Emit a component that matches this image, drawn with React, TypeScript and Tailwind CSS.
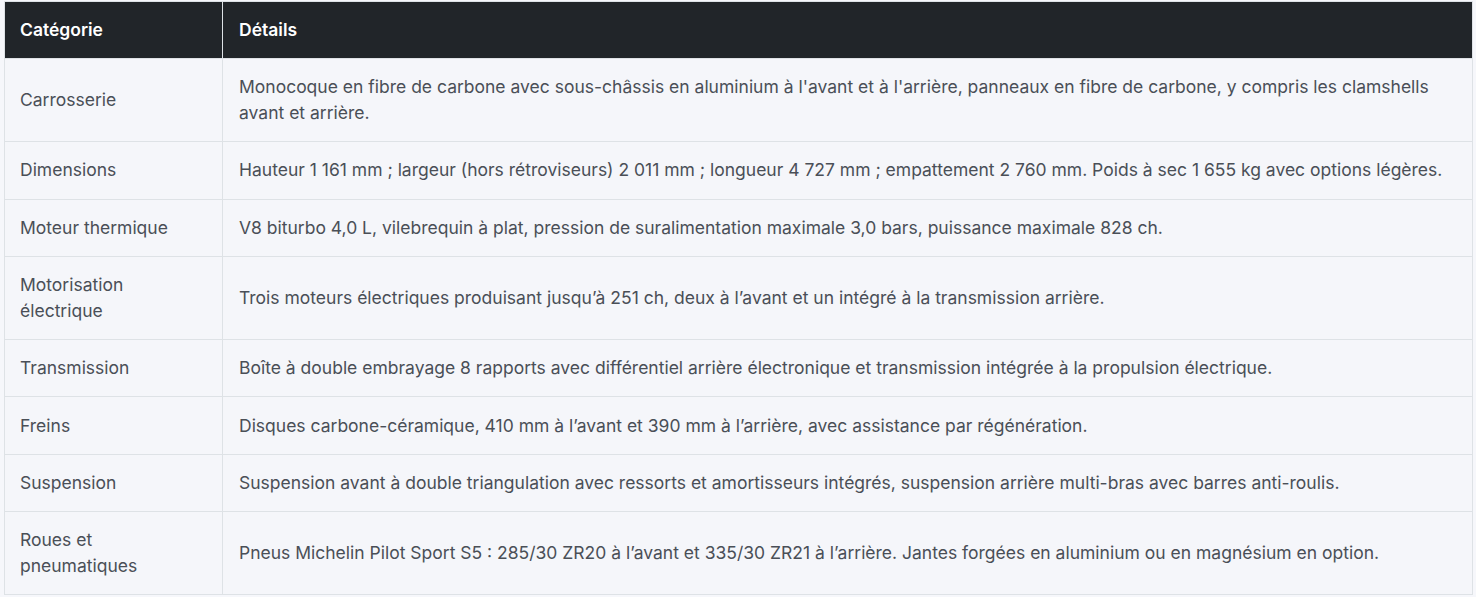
import React from "react";

const rows = [
  {
    category: "Carrosserie",
    details:
      "Monocoque en fibre de carbone avec sous-châssis en aluminium à l'avant et à l'arrière, panneaux en fibre de carbone, y compris les clamshells avant et arrière.",
  },
  {
    category: "Dimensions",
    details:
      "Hauteur 1 161 mm ; largeur (hors rétroviseurs) 2 011 mm ; longueur 4 727 mm ; empattement 2 760 mm. Poids à sec 1 655 kg avec options légères.",
  },
  {
    category: "Moteur thermique",
    details:
      "V8 biturbo 4,0 L, vilebrequin à plat, pression de suralimentation maximale 3,0 bars, puissance maximale 828 ch.",
  },
  {
    category: "Motorisation électrique",
    details:
      "Trois moteurs électriques produisant jusqu’à 251 ch, deux à l’avant et un intégré à la transmission arrière.",
  },
  {
    category: "Transmission",
    details:
      "Boîte à double embrayage 8 rapports avec différentiel arrière électronique et transmission intégrée à la propulsion électrique.",
  },
  {
    category: "Freins",
    details:
      "Disques carbone-céramique, 410 mm à l’avant et 390 mm à l’arrière, avec assistance par régénération.",
  },
  {
    category: "Suspension",
    details:
      "Suspension avant à double triangulation avec ressorts et amortisseurs intégrés, suspension arrière multi-bras avec barres anti-roulis.",
  },
  {
    category: "Roues et pneumatiques",
    details:
      "Pneus Michelin Pilot Sport S5 : 285/30 ZR20 à l’avant et 335/30 ZR21 à l’arrière. Jantes forgées en aluminium ou en magnésium en option.",
  },
];

export default function App() {
  return (
    <div className="min-h-[597px] bg-[#f6f7fb] pl-1 pr-[3px] pt-px font-['Inter',sans-serif] text-[17.5px] leading-[26px]">
      <table className="w-full border-collapse border border-[#dee2e6] text-left">
        <thead>
          <tr className="bg-[#212529] text-white">
            <th className="w-[218px] border-r border-[#dee2e6] py-[15px] pl-[15px] pr-4 font-semibold">Catégorie</th>
            <th className="px-4 py-[15px] font-semibold">Détails</th>
          </tr>
        </thead>
        <tbody>
          {rows.map((row) => (
            <tr key={row.category} className="border-t border-[#dee2e6] bg-[#f5f6fa] text-[#4a4f57]">
              <td className="border-r border-[#dee2e6] py-[15.15px] pl-[15px] pr-4 align-middle">{row.category}</td>
              <td className="px-4 py-[15.15px] align-middle">{row.details}</td>
            </tr>
          ))}
        </tbody>
      </table>
    </div>
  );
}
